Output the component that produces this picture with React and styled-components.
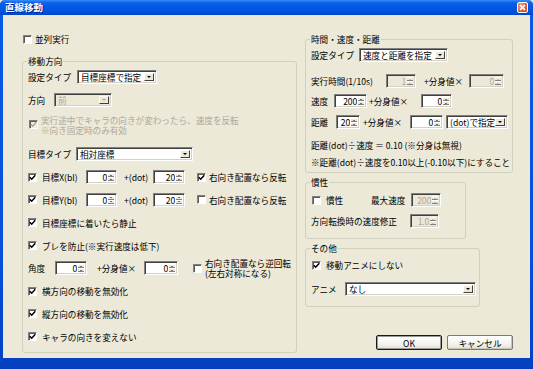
import React from 'react';
import styled, { createGlobalStyle } from 'styled-components';

const GlobalStyle = createGlobalStyle`
  html, body {
    margin: 0;
    padding: 0;
    background: #ECE9D8;
  }
  body {
    font-family: "Noto Sans CJK JP", "Noto Sans", sans-serif;
    font-size: 8.6px;
    color: #000;
  }
`;

const Window = styled.div`
  width: 533px;
  height: 369px;
  box-sizing: border-box;
  display: flex;
  flex-direction: column;
  padding: 0 3px 11px 3px;
  background: linear-gradient(to bottom, #0A5AE8 0%, #0650DA 70%, #0340C0 100%);
  border-radius: 5px 5px 0 0;
  overflow: hidden;
`;

const TitleBar = styled.div`
  height: 15px;
  margin: 0 -3px;
  padding: 0 5px 0 5px;
  display: flex;
  align-items: center;
  justify-content: space-between;
  background: linear-gradient(to bottom, #3C8CF8 0%, #0A62EC 18%, #0058E6 45%, #0053DE 80%, #0047CC 100%);
`;

const Title = styled.span`
  color: #fff;
  font-weight: bold;
  font-size: 9.5px;
  line-height: 15px;
  text-shadow: 1px 1px 0 #0A1E8C;
`;

const CloseButton = styled.div`
  width: 11px;
  height: 11px;
  box-sizing: border-box;
  border: 1px solid #fff;
  border-radius: 2px;
  background: radial-gradient(circle at 35% 30%, #F0A890 0%, #E0603A 55%, #C8401E 100%);
  display: flex;
  align-items: center;
  justify-content: center;
`;

const Body = styled.div`
  flex: 1;
  background: #ECE9D8;
  display: grid;
  grid-template-columns: 275px 208px;
  column-gap: 8px;
  align-items: start;
  padding: 18px 0 0 19px;
`;

const Column = styled.div`
  display: flex;
  flex-direction: column;
  align-items: flex-start;
`;

const Group = styled.fieldset`
  margin: ${p => p.$mt || 0}px 0 0 0;
  padding: 0 5px ${p => p.$pb || 0}px 5px;
  width: ${p => p.$w}px;
  box-sizing: border-box;
  min-width: 0;
  border: 1px solid #D0D0BF;
  border-radius: 3px;
  display: flex;
  flex-direction: column;
`;

const Legend = styled.legend`
  padding: 0 1px;
  margin-left: -1px;
  line-height: 12px;
  height: 12px;
`;

const Row = styled.div`
  display: flex;
  align-items: center;
  height: ${p => p.$h || 16}px;
  margin-top: ${p => p.$mt || 0}px;
  margin-left: ${p => p.$ml || 0}px;
  white-space: nowrap;
`;

const Label = styled.span`
  display: inline-block;
  width: ${p => (p.$w ? `${p.$w}px` : 'auto')};
  margin-left: ${p => p.$ml || 0}px;
  color: ${p => (p.$disabled ? '#ACA899' : '#000')};
  line-height: 12px;
  flex-shrink: 0;
`;

const TwoLine = styled.span`
  display: flex;
  flex-direction: column;
  line-height: 10px;
  margin-left: ${p => p.$ml || 0}px;
  color: ${p => (p.$disabled ? '#ACA899' : '#000')};
`;

const Box = styled.span`
  width: 9px;
  height: 9px;
  box-sizing: border-box;
  flex-shrink: 0;
  margin-left: ${p => p.$ml || 0}px;
  margin-right: ${p => (p.$gap == null ? 5 : p.$gap)}px;
  background: ${p => (p.$disabled ? '#F0EFE6' : '#fff')};
  border-top: 1px solid #808080;
  border-left: 1px solid #808080;
  border-right: 1px solid #fff;
  border-bottom: 1px solid #fff;
  box-shadow: inset 1px 1px 0 #5A5A5A;
  display: flex;
  align-items: center;
  justify-content: center;
`;

const Field = styled.span`
  display: flex;
  align-items: stretch;
  flex-shrink: 0;
  width: ${p => p.$w}px;
  height: ${p => p.$h || 14}px;
  margin-left: ${p => p.$ml || 0}px;
  box-sizing: border-box;
  background: ${p => (p.$disabled ? '#ECE9D8' : '#fff')};
  border-top: 1px solid #808080;
  border-left: 1px solid #808080;
  border-right: 1px solid #fff;
  border-bottom: 1px solid #fff;
  box-shadow: inset 1px 1px 0 #404040, inset -1px -1px 0 #D4D0C8;
  color: ${p => (p.$disabled ? '#ACA899' : '#000')};
`;

const FieldText = styled.span`
  flex: 1;
  padding: 0 ${p => (p.$right ? '0' : '2px')} 0 ${p => (p.$right ? '1px' : '3px')};
  text-align: ${p => (p.$right ? 'right' : 'left')};
  line-height: 12px;
  overflow: hidden;
  align-self: center;
  letter-spacing: ${p => (p.$right ? '-0.2px' : '0')};
`;

const DropButton = styled.span`
  width: 10px;
  margin: 2px 2px 2px 0;
  box-sizing: border-box;
  background: #ECE9D8;
  border-top: 1px solid #fff;
  border-left: 1px solid #fff;
  border-right: 1px solid #404040;
  border-bottom: 1px solid #404040;
  display: flex;
  align-items: center;
  justify-content: center;
`;

const SpinButtons = styled.span`
  width: 6px;
  margin: 2px 2px 2px 1px;
  display: flex;
  flex-direction: column;
  background: #ECE9D8;
`;

const SpinHalf = styled.span`
  flex: 1;
  display: flex;
  align-items: center;
  justify-content: center;
  border-top: 1px solid #fff;
  border-bottom: 1px solid #808080;
`;

const Arrow = styled.span`
  width: 0;
  height: 0;
  border-left: ${p => p.$s}px solid transparent;
  border-right: ${p => p.$s}px solid transparent;
  ${p => (p.$up ? 'border-bottom' : 'border-top')}: ${p => p.$s}px solid ${p => p.$color || '#000'};
`;

const Buttons = styled.div`
  display: flex;
  gap: 5px;
  margin-top: 28px;
  align-self: flex-end;
`;

const Button = styled.div`
  width: 66px;
  height: 15px;
  box-sizing: border-box;
  display: flex;
  align-items: center;
  justify-content: center;
  border: 1px solid ${p => (p.$default ? '#1A1A1A' : '#7A7A7A')};
  border-radius: 2px;
  background: linear-gradient(to bottom, #FFFFFF 0%, #F4F3EE 60%, #E2DFD4 100%);
  box-shadow: ${p => (p.$default ? 'inset 0 0 0 1px #9A9A9A' : 'inset -1px -1px 0 #C8C4B8')};
  line-height: 12px;
`;

const Check = ({ checked, disabled, ml, gap }) => (
  <Box $disabled={disabled} $ml={ml} $gap={gap}>
    {checked && (
      <svg width="7" height="7" viewBox="0 0 7 7">
        <path d="M0.8 3.2 L2.7 5.2 L6.3 1.2" stroke={disabled ? '#ACA899' : '#000'} strokeWidth="1.5" fill="none" />
      </svg>
    )}
  </Box>
);

const Select = ({ w, ml, value, disabled }) => (
  <Field $w={w} $ml={ml} $disabled={disabled}>
    <FieldText>{value}</FieldText>
    <DropButton>
      <Arrow $s={2.5} $color={disabled ? '#ACA899' : '#000'} />
    </DropButton>
  </Field>
);

const Spinner = ({ w, ml, value, disabled }) => (
  <Field $w={w} $ml={ml} $disabled={disabled}>
    <FieldText $right>{value}</FieldText>
    <SpinButtons>
      <SpinHalf>
        <Arrow $up $s={1.5} $color={disabled ? '#ACA899' : '#000'} />
      </SpinHalf>
      <SpinHalf>
        <Arrow $s={1.5} $color={disabled ? '#ACA899' : '#000'} />
      </SpinHalf>
    </SpinButtons>
  </Field>
);

export default function App() {
  return (
    <>
      <GlobalStyle />
      <Window>
        <TitleBar>
          <Title>直線移動</Title>
          <CloseButton>
            <svg width="7" height="7" viewBox="0 0 7 7">
              <path d="M1 1 L6 6 M6 1 L1 6" stroke="#fff" strokeWidth="1.6" />
            </svg>
          </CloseButton>
        </TitleBar>
        <Body>
          <Column>
            <Row $h={12} $ml={1}>
              <Check gap={3} />
              <Label>並列実行</Label>
            </Row>
            <Group $w={275} $mt={10} $pb={7}>
              <Legend>移動方向</Legend>
              <Row $mt={2}>
                <Label $w={49}>設定タイプ</Label>
                <Select w={80} value="目標座標で指定" />
              </Row>
              <Row $mt={6.8}>
                <Label $w={26}>方向</Label>
                <Select w={58} value="前" disabled />
              </Row>
              <Row $h={20} $mt={6.8} $ml={1}>
                <Check checked disabled gap={3} />
                <TwoLine $disabled>
                  <span>実行途中でキャラの向きが変わったら、速度を反転</span>
                  <span>※向き固定時のみ有効</span>
                </TwoLine>
              </Row>
              <Row $mt={11.8}>
                <Label $w={48}>目標タイプ</Label>
                <Select w={117} value="相対座標" />
              </Row>
              <Row $mt={6.8}>
                <Check checked />
                <Label $w={44}>目標X(bl)</Label>
                <Spinner w={31} value="0" />
                <Label $w={29} $ml={7}>+(dot)</Label>
                <Spinner w={32} value="20" />
                <Check checked ml={12} gap={3} />
                <Label>右向き配置なら反転</Label>
              </Row>
              <Row $mt={6.8}>
                <Check checked />
                <Label $w={44}>目標Y(bl)</Label>
                <Spinner w={31} value="0" />
                <Label $w={29} $ml={7}>+(dot)</Label>
                <Spinner w={32} value="20" />
                <Check ml={12} gap={3} />
                <Label>右向き配置なら反転</Label>
              </Row>
              <Row $mt={6.8}>
                <Check checked />
                <Label>目標座標に着いたら静止</Label>
              </Row>
              <Row $mt={6.8}>
                <Check checked />
                <Label>ブレを防止(※実行速度は低下)</Label>
              </Row>
              <Row $mt={6.8}>
                <Label $w={27}>角度</Label>
                <Spinner w={32} value="0" />
                <Label $w={47} $ml={10}>+分身値×</Label>
                <Spinner w={34} value="0" />
                <Check ml={15} gap={3} />
                <TwoLine>
                  <span>右向き配置なら逆回転</span>
                  <span>(左右対称になる)</span>
                </TwoLine>
              </Row>
              <Row $mt={6.8}>
                <Check checked />
                <Label>横方向の移動を無効化</Label>
              </Row>
              <Row $mt={6.8}>
                <Check checked />
                <Label>縦方向の移動を無効化</Label>
              </Row>
              <Row $mt={6.8}>
                <Check checked />
                <Label>キャラの向きを変えない</Label>
              </Row>
            </Group>
          </Column>

          <Column>
            <Group $w={208} $pb={3}>
              <Legend>時間・速度・距離</Legend>
              <Row $h={14} $mt={3}>
                <Label $w={48}>設定タイプ</Label>
                <Select w={89} value="速度と距離を指定" />
              </Row>
              <Row $h={14} $mt={12}>
                <Label $w={75}>実行時間(1/10s)</Label>
                <Spinner w={30} value="1" disabled />
                <Label $w={45} $ml={8}>+分身値×</Label>
                <Spinner w={35} value="0" disabled />
              </Row>
              <Row $h={14} $mt={6}>
                <Label $w={23}>速度</Label>
                <Spinner w={33} value="200" />
                <Label $w={52} $ml={2}>+分身値×</Label>
                <Spinner w={31} value="0" />
              </Row>
              <Row $h={14} $mt={7}>
                <Label $w={25}>距離</Label>
                <Spinner w={24} value="20" />
                <Label $w={47} $ml={3}>+分身値×</Label>
                <Spinner w={33} value="0" />
                <Select w={62} ml={3} value="(dot)で指定" />
              </Row>
              <Row $h={14} $mt={9}>
                <Label>距離(dot)÷速度 ＝ 0.10 (※分身は無視)</Label>
              </Row>
              <Row $h={14} $mt={3}>
                <Label>※距離(dot)÷速度を0.10以上(-0.10以下)にすること</Label>
              </Row>
            </Group>

            <Group $w={161} $mt={3} $pb={10}>
              <Legend>慣性</Legend>
              <Row $h={14} $mt={5} $ml={1}>
                <Check gap={5} />
                <Label $w={45}>慣性</Label>
                <Label $w={40}>最大速度</Label>
                <Spinner w={30} value="200" disabled />
              </Row>
              <Row $h={14} $mt={7}>
                <Label $w={99}>方向転換時の速度修正</Label>
                <Spinner w={29} value="1.0" disabled />
              </Row>
            </Group>

            <Group $w={175} $mt={3} $pb={10}>
              <Legend>その他</Legend>
              <Row $h={14} $mt={4} $ml={1}>
                <Check checked gap={5} />
                <Label>移動アニメにしない</Label>
              </Row>
              <Row $h={14} $mt={10}>
                <Label $w={34}>アニメ</Label>
                <Select w={131} value="なし" />
              </Row>
            </Group>

            <Buttons>
              <Button $default>OK</Button>
              <Button>キャンセル</Button>
            </Buttons>
          </Column>
        </Body>
      </Window>
    </>
  );
}
